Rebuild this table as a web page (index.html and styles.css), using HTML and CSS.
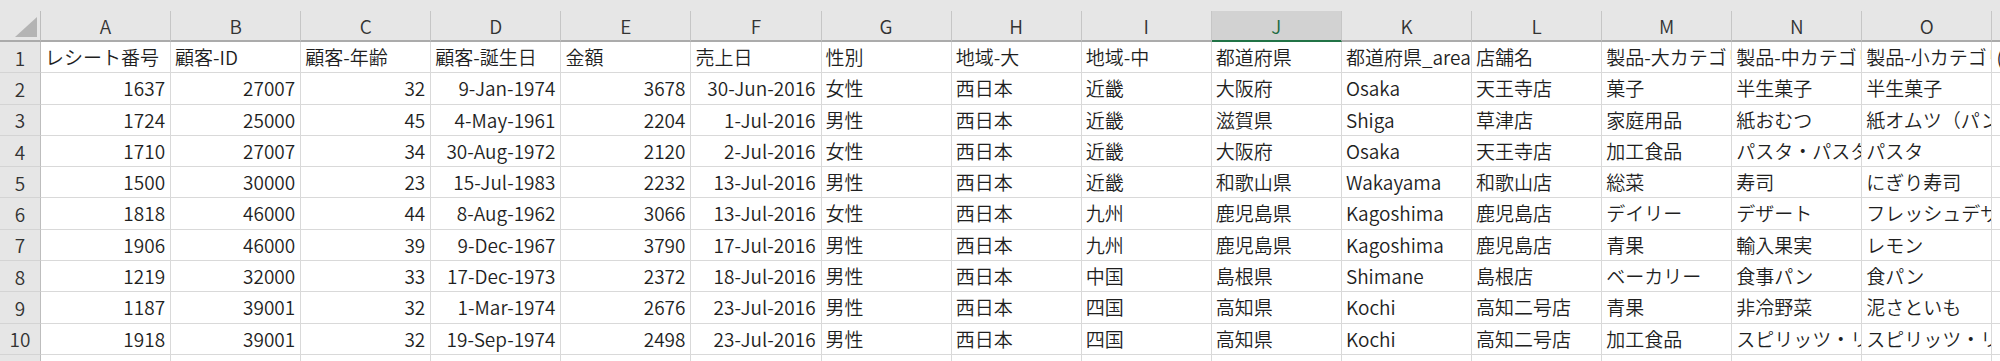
FILE: index.html
```html
<!DOCTYPE html>
<html lang="ja">
<head>
<meta charset="utf-8">
<title>Sheet</title>
<link rel="stylesheet" href="styles.css">
</head>
<body>
<div class="strip"></div>
<div class="sheet">
  <div class="corner"><svg class="tri" width="22" height="20" viewBox="0 0 22 20"><polygon points="22,0 22,20 0,20" fill="#b4b4b4"/></svg></div>
  <div class="ch">A</div><div class="ch">B</div><div class="ch">C</div><div class="ch">D</div><div class="ch">E</div><div class="ch">F</div><div class="ch">G</div><div class="ch">H</div><div class="ch">I</div><div class="ch sel">J</div><div class="ch">K</div><div class="ch">L</div><div class="ch">M</div><div class="ch">N</div><div class="ch">O</div><div class="ch">P</div>

  <div class="rh">1</div>
  <div class="c">レシート番号</div><div class="c">顧客-ID</div><div class="c">顧客-年齢</div><div class="c">顧客-誕生日</div><div class="c">金額</div><div class="c">売上日</div><div class="c">性別</div><div class="c">地域-大</div><div class="c">地域-中</div><div class="c">都道府県</div><div class="c">都道府県_area</div><div class="c">店舗名</div><div class="c">製品-大カテゴリ</div><div class="c">製品-中カテゴリ</div><div class="c">製品-小カテゴリ</div><div class="c">(数量)</div>

  <div class="rh">2</div>
  <div class="c n">1637</div><div class="c n">27007</div><div class="c n">32</div><div class="c n">9-Jan-1974</div><div class="c n">3678</div><div class="c n">30-Jun-2016</div><div class="c">女性</div><div class="c">西日本</div><div class="c">近畿</div><div class="c">大阪府</div><div class="c">Osaka</div><div class="c">天王寺店</div><div class="c">菓子</div><div class="c">半生菓子</div><div class="c">半生菓子</div><div class="c n">1</div>

  <div class="rh">3</div>
  <div class="c n">1724</div><div class="c n">25000</div><div class="c n">45</div><div class="c n">4-May-1961</div><div class="c n">2204</div><div class="c n">1-Jul-2016</div><div class="c">男性</div><div class="c">西日本</div><div class="c">近畿</div><div class="c">滋賀県</div><div class="c">Shiga</div><div class="c">草津店</div><div class="c">家庭用品</div><div class="c">紙おむつ</div><div class="c">紙オムツ（パンツ）</div><div class="c n">1</div>

  <div class="rh">4</div>
  <div class="c n">1710</div><div class="c n">27007</div><div class="c n">34</div><div class="c n">30-Aug-1972</div><div class="c n">2120</div><div class="c n">2-Jul-2016</div><div class="c">女性</div><div class="c">西日本</div><div class="c">近畿</div><div class="c">大阪府</div><div class="c">Osaka</div><div class="c">天王寺店</div><div class="c">加工食品</div><div class="c">パスタ・パスタソース</div><div class="c">パスタ</div><div class="c n">2</div>

  <div class="rh">5</div>
  <div class="c n">1500</div><div class="c n">30000</div><div class="c n">23</div><div class="c n">15-Jul-1983</div><div class="c n">2232</div><div class="c n">13-Jul-2016</div><div class="c">男性</div><div class="c">西日本</div><div class="c">近畿</div><div class="c">和歌山県</div><div class="c">Wakayama</div><div class="c">和歌山店</div><div class="c">総菜</div><div class="c">寿司</div><div class="c">にぎり寿司</div><div class="c n">1</div>

  <div class="rh">6</div>
  <div class="c n">1818</div><div class="c n">46000</div><div class="c n">44</div><div class="c n">8-Aug-1962</div><div class="c n">3066</div><div class="c n">13-Jul-2016</div><div class="c">女性</div><div class="c">西日本</div><div class="c">九州</div><div class="c">鹿児島県</div><div class="c">Kagoshima</div><div class="c">鹿児島店</div><div class="c">デイリー</div><div class="c">デザート</div><div class="c">フレッシュデザート</div><div class="c n">3</div>

  <div class="rh">7</div>
  <div class="c n">1906</div><div class="c n">46000</div><div class="c n">39</div><div class="c n">9-Dec-1967</div><div class="c n">3790</div><div class="c n">17-Jul-2016</div><div class="c">男性</div><div class="c">西日本</div><div class="c">九州</div><div class="c">鹿児島県</div><div class="c">Kagoshima</div><div class="c">鹿児島店</div><div class="c">青果</div><div class="c">輸入果実</div><div class="c">レモン</div><div class="c n">2</div>

  <div class="rh">8</div>
  <div class="c n">1219</div><div class="c n">32000</div><div class="c n">33</div><div class="c n">17-Dec-1973</div><div class="c n">2372</div><div class="c n">18-Jul-2016</div><div class="c">男性</div><div class="c">西日本</div><div class="c">中国</div><div class="c">島根県</div><div class="c">Shimane</div><div class="c">島根店</div><div class="c">ベーカリー</div><div class="c">食事パン</div><div class="c">食パン</div><div class="c n">1</div>

  <div class="rh">9</div>
  <div class="c n">1187</div><div class="c n">39001</div><div class="c n">32</div><div class="c n">1-Mar-1974</div><div class="c n">2676</div><div class="c n">23-Jul-2016</div><div class="c">男性</div><div class="c">西日本</div><div class="c">四国</div><div class="c">高知県</div><div class="c">Kochi</div><div class="c">高知二号店</div><div class="c">青果</div><div class="c">非冷野菜</div><div class="c">泥さといも</div><div class="c n">1</div>

  <div class="rh">10</div>
  <div class="c n">1918</div><div class="c n">39001</div><div class="c n">32</div><div class="c n">19-Sep-1974</div><div class="c n">2498</div><div class="c n">23-Jul-2016</div><div class="c">男性</div><div class="c">西日本</div><div class="c">四国</div><div class="c">高知県</div><div class="c">Kochi</div><div class="c">高知二号店</div><div class="c">加工食品</div><div class="c">スピリッツ・リキュール</div><div class="c">スピリッツ・リキュール</div><div class="c n">2</div>

  <div class="rh">11</div>
  <div class="c"></div><div class="c"></div><div class="c"></div><div class="c"></div><div class="c"></div><div class="c"></div><div class="c"></div><div class="c"></div><div class="c"></div><div class="c"></div><div class="c"></div><div class="c"></div><div class="c"></div><div class="c"></div><div class="c"></div><div class="c"></div>
</div>
</body>
</html>
```

FILE: styles.css
```css
html, body {
  margin: 0;
  padding: 0;
}
body {
  width: 2000px;
  height: 361px;
  overflow: hidden;
  background: #ffffff;
  font-family: "Noto Sans CJK JP", "Noto Sans", sans-serif;
  font-size: 19px;
  font-weight: 350;
  color: #1f1f1f;
}
.strip {
  height: 11px;
  background: #e6e6e6;
}
.sheet {
  display: grid;
  grid-template-columns: 41px repeat(16, 130.1px);
  grid-template-rows: 31px repeat(11, 31.3px);
  width: max-content;
}
.corner {
  box-sizing: border-box;
  background: #e6e6e6;
  border-right: 1px solid #bdbdbd;
  border-bottom: 2px solid #ababab;
  display: flex;
  justify-content: flex-end;
  align-items: flex-end;
  padding: 0 3px 3px 0;
}
.tri {
  display: block;
}
.ch {
  box-sizing: border-box;
  background: #e6e6e6;
  border-right: 1px solid #c6c6c6;
  border-bottom: 2px solid #ababab;
  color: #333333;
  display: flex;
  align-items: center;
  justify-content: center;
  line-height: 1;
}
.ch.sel {
  background: #d2d2d2;
  color: #1e6b41;
  border-bottom-color: #217346;
}
.rh {
  box-sizing: border-box;
  background: #e6e6e6;
  border-right: 1px solid #bdbdbd;
  border-bottom: 1px solid #d4d4d4;
  color: #333333;
  display: flex;
  align-items: center;
  justify-content: center;
}
.c {
  box-sizing: border-box;
  border-right: 1px solid #d9d9d9;
  border-bottom: 1px solid #d9d9d9;
  white-space: nowrap;
  overflow: hidden;
  padding: 0 5px 0 4px;
  line-height: 30.3px;
  text-align: left;
}
.c.n {
  text-align: right;
}
```
